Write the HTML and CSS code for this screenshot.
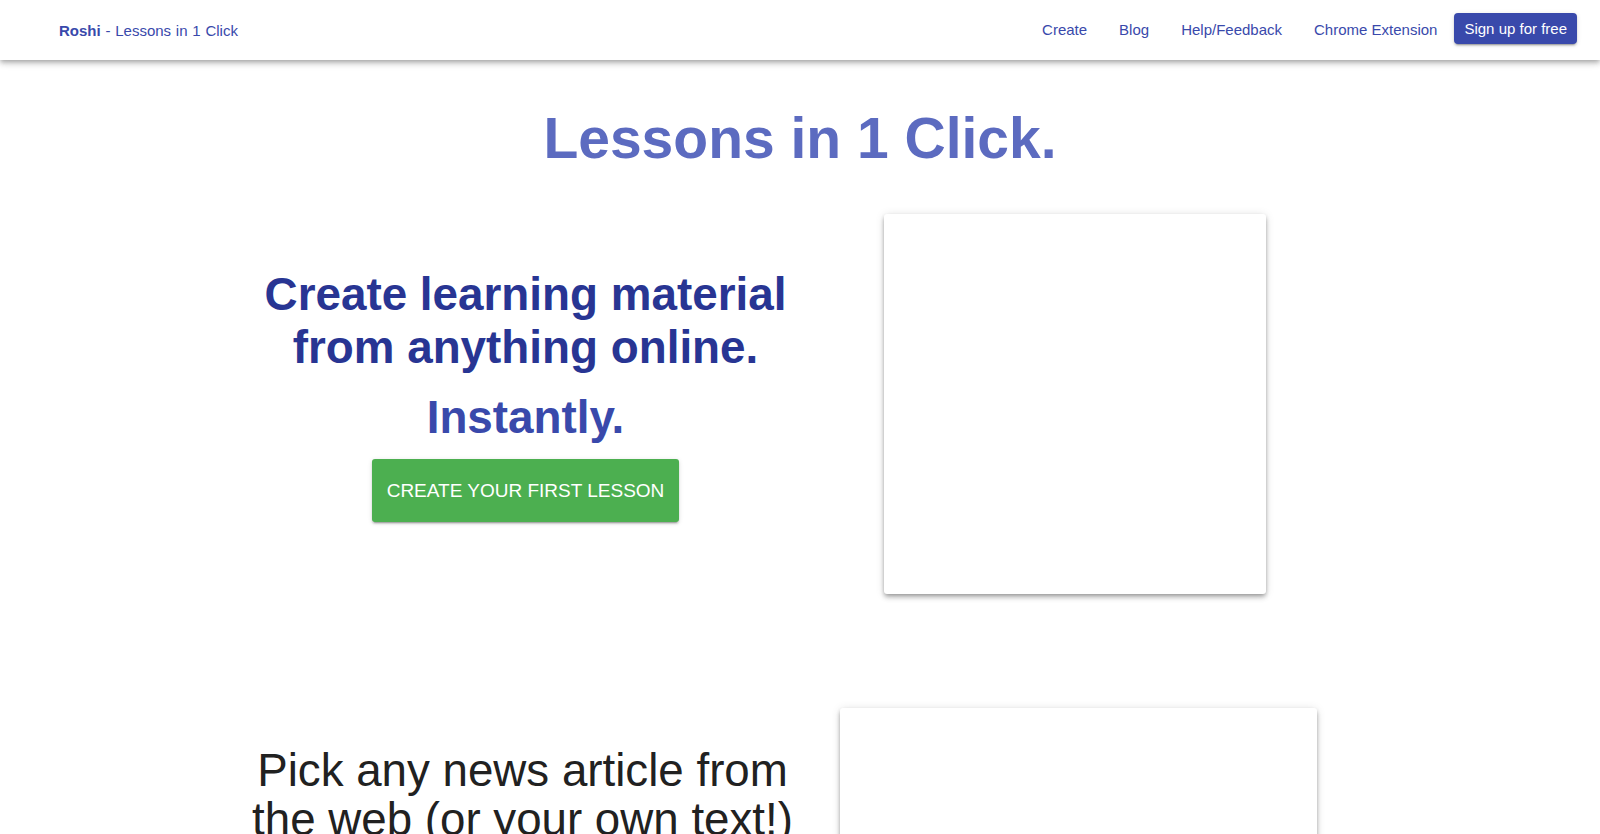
FILE: index.html
```html
<!DOCTYPE html>
<html lang="en">
<head>
<meta charset="utf-8">
<title>Roshi - Lessons in 1 Click</title>
<link rel="stylesheet" href="styles.css">
</head>
<body>
<header class="topbar">
  <a class="brand" href="#"><strong>Roshi</strong> - Lessons in 1 Click</a>
  <nav class="nav">
    <a class="nav-link" href="#">Create</a>
    <a class="nav-link" href="#">Blog</a>
    <a class="nav-link" href="#">Help/Feedback</a>
    <a class="nav-link" href="#">Chrome Extension</a>
    <a class="signup" href="#">Sign up for free</a>
  </nav>
</header>
<main class="main">
  <h1 class="title">Lessons in 1 Click.</h1>
  <section class="row row-hero">
    <div class="col-text">
      <h2 class="headline">Create learning material<br>from anything online.</h2>
      <div class="instantly">Instantly.</div>
      <a class="cta" href="#">CREATE YOUR FIRST LESSON</a>
    </div>
    <div class="col-media">
      <div class="card card-video"></div>
    </div>
  </section>
  <section class="row row-step">
    <div class="col-text">
      <p class="step-text">Pick any news article from<br>the web (or your own text!)</p>
    </div>
    <div class="col-media">
      <div class="card card-step"></div>
    </div>
  </section>
</main>
</body>
</html>
```

FILE: styles.css
```css
* { box-sizing: border-box; }

html, body {
  margin: 0;
  padding: 0;
  background: #ffffff;
  font-family: "Liberation Sans", Arial, Helvetica, sans-serif;
}

body { overflow: hidden; }

a { text-decoration: none; }

.topbar {
  height: 60px;
  display: flex;
  align-items: center;
  justify-content: space-between;
  padding: 0 23px 0 59px;
  background: #ffffff;
  box-shadow: 0 2px 4px -1px rgba(0,0,0,0.2), 0 4px 5px 0 rgba(0,0,0,0.14), 0 1px 10px 0 rgba(0,0,0,0.12);
  position: relative;
  z-index: 2;
}

.brand {
  font-size: 15px;
  word-spacing: 0.6px;
  color: #3949ab;
}

.brand strong { font-weight: 700; }

.nav {
  display: flex;
  align-items: center;
}

.nav-link {
  font-size: 15px;
  color: #3949ab;
  padding: 0 16px;
  line-height: 20px;
}

.signup {
  margin-left: 1px;
  height: 31px;
  line-height: 31px;
  padding: 0 10px;
  font-size: 15px;
  color: #ffffff;
  background: #3949ab;
  border-radius: 4px;
  margin-bottom: 3px;
  box-shadow: 0 2px 2px 0 rgba(0,0,0,0.14), 0 1px 5px 0 rgba(0,0,0,0.12), 0 3px 1px -2px rgba(0,0,0,0.2);
}

.main {
  width: 1098px;
  margin: 0 auto;
}

.title {
  margin: 44px 0 0;
  font-size: 57px;
  line-height: 68px;
  font-weight: 700;
  text-align: center;
  color: #5c6bc0;
}

.row {
  display: grid;
  grid-template-columns: 549px 549px;
  align-items: start;
}

.row-hero { margin-top: 42px; }

.row-step { margin-top: 114px; }

.col-text { text-align: center; }

.row-hero .col-text { padding-top: 54px; }

.row-step .col-text { padding: 38px 6px 0 0; }

.col-media {
  display: flex;
  justify-content: center;
}

.headline {
  margin: 0;
  font-size: 45.8px;
  line-height: 53px;
  font-weight: 700;
  color: #283593;
}

.instantly {
  margin-top: 17px;
  font-size: 45.8px;
  line-height: 53px;
  font-weight: 700;
  color: #3949ab;
}

.cta {
  display: inline-block;
  margin-top: 15px;
  height: 63px;
  line-height: 63px;
  padding: 0 15px;
  font-size: 19px;
  color: #ffffff;
  background: #4caf50;
  border-radius: 3px;
  box-shadow: 0 2px 2px 0 rgba(0,0,0,0.14), 0 1px 5px 0 rgba(0,0,0,0.12), 0 3px 1px -2px rgba(0,0,0,0.2);
}

.card {
  background: #ffffff;
  border-radius: 3px;
  box-shadow: 0 4px 5px 0 rgba(0,0,0,0.14), 0 1px 10px 0 rgba(0,0,0,0.12), 0 2px 4px -1px rgba(0,0,0,0.3);
}

.card-video {
  width: 382px;
  height: 380px;
}

.card-step {
  width: 477px;
  height: 400px;
  margin-left: 7px;
}

.step-text {
  margin: 0;
  font-size: 45.7px;
  line-height: 49px;
  font-weight: 400;
  color: #212121;
}
```
